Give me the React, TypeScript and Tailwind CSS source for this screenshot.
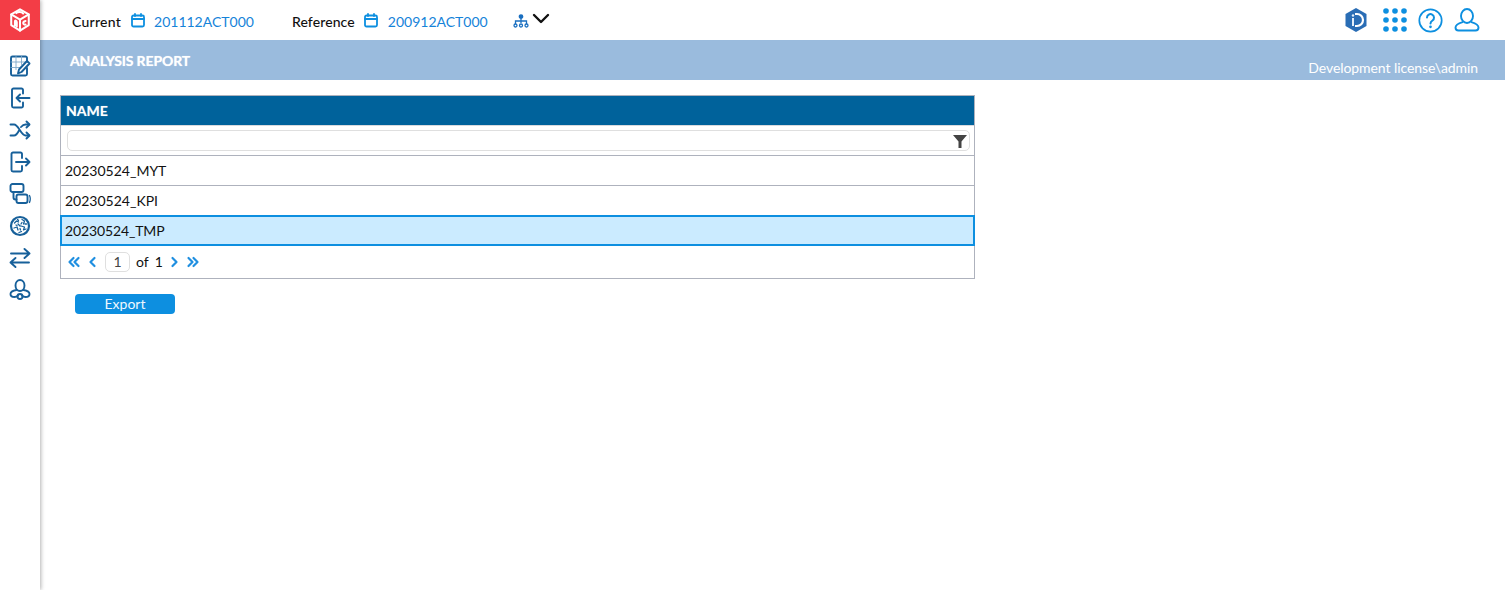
import React from "react";

const Nav = ({ children }: { children: React.ReactNode }) => (
  <svg width="22" height="22" viewBox="0 0 22 22" fill="none" stroke="#17609a" strokeWidth="1.900" strokeLinecap="round" strokeLinejoin="round">
    {children}
  </svg>
);

const Cal = () => (
  <svg width="14" height="15" viewBox="0 0 14 15" fill="none" stroke="#0d8fe0" strokeWidth="1.800" strokeLinecap="round" strokeLinejoin="round">
    <rect x="1" y="2.500" width="12" height="11" rx="1.500" />
    <path d="M1 6h12M4 1v2M10 1v2" />
  </svg>
);

const Page = ({ children }: { children: React.ReactNode }) => (
  <svg width="14" height="14" viewBox="0 0 14 14" fill="none" stroke="#1f8fe0" strokeWidth="2.200" strokeLinecap="round" strokeLinejoin="round">
    {children}
  </svg>
);

const rows = ["20230524_MYT", "20230524_KPI"];

export default function App() {
  return (
    <div className="flex h-[590px] w-[1505px] overflow-hidden bg-white text-[14px] text-[#111] font-['Lato','Noto_Sans',sans-serif]">
      <aside className="relative z-10 flex w-10 shrink-0 flex-col items-center bg-white shadow-[1px_0_4px_rgba(0,0,0,0.3)]">
        <div className="flex h-10 w-10 items-center justify-center bg-[#f33d46]">
          <svg width="24" height="26" viewBox="0 0 26 28" fill="none" stroke="#fff" strokeWidth="2.200" strokeLinejoin="round" strokeLinecap="round">
            <path d="M13 2.500l9.500 5.500v11.500L13 25.500 3.500 19.500V8z" />
            <path d="M3.500 8l9.500 5.500L22.500 8M13 13.500v12" />
            <path d="M9 6.500c1.500-1.500 6-1.500 7.500.5" />
            <path d="M7.500 20v-4.500c0-1.500 2-1 2 1V21" />
            <path d="M19 15c-1.500.3-2.500 1-2.500 2.200s1 2 2.500 1.800" />
          </svg>
        </div>
        <div className="mt-[15px] flex flex-col items-center gap-[10px]">
          <Nav>
            <path d="M18 6V3a1.500 1.500 0 0 0-1.500-1.500h-13A1.500 1.500 0 0 0 2 3v16a1.500 1.500 0 0 0 1.500 1.500h13A1.500 1.500 0 0 0 18 19v-6" />
            <path d="M2 7h15M2 12.500h10M7 1.500v13M12.500 1.500v8" strokeWidth="0.900" stroke="#7fa8c8" />
            <path d="M9 18.500l1-4 8-8.500 2.500 2.500-8 8.500z" fill="#fff" />
          </Nav>
          <Nav>
            <path d="M14 6.500V3a1.500 1.500 0 0 0-1.500-1.500h-8A1.500 1.500 0 0 0 3 3v16a1.500 1.500 0 0 0 1.500 1.500h8A1.500 1.500 0 0 0 14 19v-3.500" />
            <path d="M20.500 11H7.500M11 7.500L7.500 11l3.500 3.500" />
          </Nav>
          <Nav>
            <path d="M1.500 5.500H5c4.500 0 7 11 11.500 11H20M1.500 16.500H5c2 0 3.500-2 5-5M12 8c1.300-1.500 2.700-2.500 4.500-2.500H20" />
            <path d="M17.500 2.500l3 3-3 3M17.500 13.500l3 3-3 3" />
          </Nav>
          <Nav>
            <path d="M13 7V3a1.500 1.500 0 0 0-1.500-1.500H4A1.500 1.500 0 0 0 2.500 3v16A1.500 1.500 0 0 0 4 20.500h7.500A1.500 1.500 0 0 0 13 19v-4" />
            <path d="M7 11h13.500M17 7.500l3.500 3.500-3.500 3.500" />
          </Nav>
          <Nav>
            <rect x="1.500" y="1" width="13" height="8" rx="2" />
            <path d="M4.500 9v5.500a2 2 0 0 0 2 2h1" />
            <rect x="7.500" y="11.500" width="11" height="8.500" rx="2" />
            <path d="M20.500 12.500c1 2 1 4.500 0 7" strokeWidth="1.300" />
          </Nav>
          <Nav>
            <circle cx="11" cy="11" r="9" strokeWidth="2.200" />
            <path d="M5.500 8l2-2 2 1M13 4.500l2.500 1.500-1 3M5 13l3-1 1 3M12 11l3.500 1-1 3 2.500-1M9 9l2 2M10 17.500l2.500-1M8.500 4.500l1 1M16 9h1.500M11 13.500l.5 1.500M7 10l1 .5M13 7.500l-1 1.500" strokeWidth="1.300" />
          </Nav>
          <Nav>
            <path d="M2 6.500h18.500M15.500 2l5 4.500-5 4.500" />
            <path d="M20 15.500H1.500M6.500 11l-5 4.500 5 4.500" />
          </Nav>
          <Nav>
            <ellipse cx="11" cy="6.500" rx="4.500" ry="5.500" />
            <path d="M7.500 11C4 11.500 1.500 12.500 1.500 15c0 2 2 3 4 3 1.500 0 2.800-.7 3.500-1.500M14.500 11c3.500.5 6 1.500 6 4 0 2-2 3-4 3-1.500 0-2.800-.7-3.500-1.500" />
            <circle cx="11" cy="17.500" r="2.500" />
          </Nav>
        </div>
      </aside>

      <main className="flex min-w-0 flex-1 flex-col">
        <header className="flex h-10 items-center pl-8 pr-[25px] pt-[3px]">
          <span className="mr-[10px] font-medium tracking-[0.25px]">Current</span>
          <span className="-mt-[2px]"><Cal /></span>
          <span className="ml-[9px] text-[#1583d9]">201112ACT000</span>
          <span className="ml-[38px] mr-[9px] font-medium tracking-[0.1px]">Reference</span>
          <span className="-mt-[2px]"><Cal /></span>
          <span className="ml-[10px] text-[#1583d9]">200912ACT000</span>
          <svg className="ml-[25px] -mt-[2px]" width="16" height="14" viewBox="0 0 16 14" fill="none" stroke="#1a6fc0" strokeWidth="1.300">
            <circle cx="8" cy="2.500" r="1.700" fill="#1a6fc0" />
            <path d="M8 4v5M2.500 10V7h11v3" />
            <circle cx="2.500" cy="11.500" r="1.500" />
            <circle cx="8" cy="11.500" r="1.500" />
            <circle cx="13.500" cy="11.500" r="1.500" />
          </svg>
          <svg className="mb-[6px] ml-[3px]" width="18" height="11" viewBox="0 0 18 11" fill="none" stroke="#111" strokeWidth="2.400" strokeLinecap="round" strokeLinejoin="round">
            <path d="M2 2l7 7 7-7" />
          </svg>
          <div className="ml-auto -mt-[3px] flex items-center">
            <svg width="24" height="26" viewBox="0 0 24 26">
              <path d="M12 1l10.500 6v12L12 25 1.500 19V7z" fill="#2a6db5" />
              <path d="M11 7h2a6 6 0 0 1 0 12h-2" fill="none" stroke="#fff" strokeWidth="2.200" />
              <path d="M9 11v8" stroke="#e3eefa" strokeWidth="2" />
              <circle cx="9" cy="8.500" r="1.200" fill="#e3eefa" />
            </svg>
            <svg className="ml-[15px]" width="24" height="24" viewBox="0 0 24 24" fill="#0d8fe0">
              {[3, 12, 21].flatMap((y) =>
                [3, 12, 21].map((x) => <circle key={`${x}-${y}`} cx={x} cy={y} r="2.800" />)
              )}
            </svg>
            <svg className="ml-[11px]" width="25" height="25" viewBox="0 0 25 25" fill="none" stroke="#0d8fe0" strokeWidth="1.700" strokeLinecap="round">
              <circle cx="12.500" cy="12.500" r="11.200" />
              <path d="M9 9.500a3.500 3.500 0 1 1 5.500 3c-1.300.9-2 1.500-2 3" strokeWidth="2" />
              <circle cx="12.500" cy="18.800" r="0.600" strokeWidth="1.500" />
            </svg>
            <svg className="ml-[11px]" width="26" height="24" viewBox="0 0 26 24" fill="none" stroke="#0d8fe0" strokeWidth="1.900" strokeLinejoin="round">
              <ellipse cx="13" cy="8" rx="6" ry="7" />
              <path d="M9 14c-3.500 1-7.500 2-7.500 5.500 0 2 1.300 3 3 3h17c1.700 0 3-1 3-3 0-3.500-4-4.500-7.500-5.500" />
            </svg>
          </div>
        </header>

        <div className="flex h-10 items-start justify-between bg-[#9abbdd] pl-[30px] pr-[27px] text-white">
          <h1 className="mt-[12px] text-[14px] font-bold leading-[17px] tracking-[-0.13px] text-white [text-shadow:0_0_1px_rgba(255,255,255,0.7)]">ANALYSIS REPORT</h1>
          <span className="mt-[19px] text-[14px] leading-[17px] tracking-[-0.08px]">Development license\admin</span>
        </div>

        <section className="px-5 pt-[15px]">
          <div className="w-[915px] border border-[#aeb2bd]">
            <div className="flex h-[29px] items-center bg-[#00629b] px-[5px] text-[14px] font-bold text-white [text-shadow:0_0_1px_rgba(255,255,255,0.5)]">NAME</div>
            <div className="flex h-[30px] items-center border-t border-[#d8dade] pl-[6px] pr-1">
              <div className="flex h-[21px] flex-1 items-center justify-end rounded-[5px] border border-[#dfdfdf] pr-[2px]">
                <svg width="14" height="14" viewBox="0 0 14 14">
                  <path d="M0 1h14L8.500 7.500V14h-3V7.500z" fill="#444" />
                </svg>
              </div>
            </div>
            {rows.map((r) => (
              <div key={r} className="flex h-[30px] items-center border-t border-[#aeb2bd] px-1">{r}</div>
            ))}
            <div className="-mx-px -mb-px flex h-[31px] items-center border-2 border-[#0d8fe0] bg-[#cbebff] px-[3px] tracking-[-0.13px]">20230524_TMP</div>
            <div className="flex h-[33px] items-center pl-[6px]">
              <Page><path d="M6.500 3L2.500 7l4 4M11.500 3L7.500 7l4 4" /></Page>
              <span className="ml-[5px]"><Page><path d="M8.500 3L4.500 7l4 4" /></Page></span>
              <span className="ml-[5px] flex h-5 w-[25px] items-center justify-center rounded-[5px] border border-[#dfdfdf] text-[#444]">1</span>
              <span className="ml-[6px]">of</span>
              <span className="ml-[6px]">1</span>
              <span className="ml-[4px]"><Page><path d="M5.500 3l4 4-4 4" /></Page></span>
              <span className="ml-[5px]"><Page><path d="M2.500 3l4 4-4 4M7.500 3l4 4-4 4" /></Page></span>
            </div>
          </div>
          <button className="ml-[15px] mt-[15px] block h-5 w-[100px] rounded-[4px] bg-[#0d8fe0] text-center text-[14px] leading-5 text-[#eef8ff]">Export</button>
        </section>
      </main>
    </div>
  );
}
